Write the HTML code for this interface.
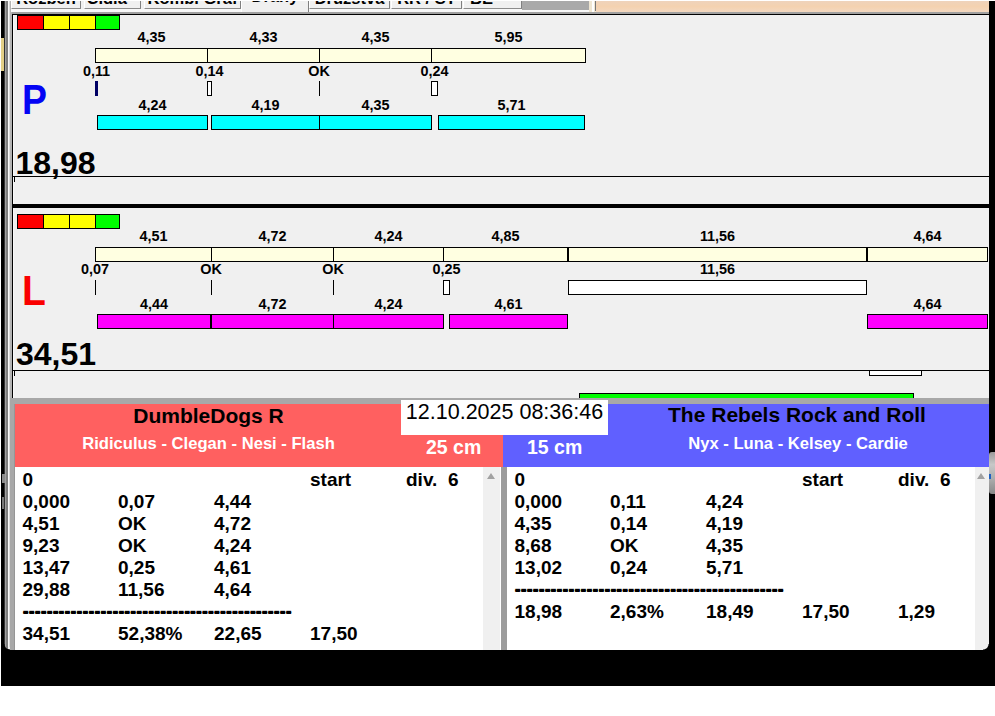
<!DOCTYPE html>
<html><head><meta charset="utf-8"><title>Dráhy</title>
<style>
html,body{margin:0;padding:0;}
body{width:995px;height:716px;position:relative;overflow:hidden;background:#fff;font-family:"Liberation Sans",sans-serif;color:#000;}
div{position:absolute;box-sizing:border-box;}
.b{border:1px solid #000;}
.l{font-weight:bold;font-size:14.4px;line-height:16px;text-align:center;white-space:nowrap;}
.tab{top:-11px;height:20px;background:#f0f0f0;border-right:1px solid #808080;border-bottom:1px solid #8c8c8c;border-left:1px solid #fff;font-weight:bold;font-size:16.5px;line-height:18px;text-align:center;overflow:hidden;white-space:nowrap;}
.big{font-weight:bold;font-size:32px;line-height:36px;white-space:nowrap;}
.let{font-weight:bold;font-size:42.5px;line-height:48px;}
.row{font-weight:bold;font-size:19px;line-height:22px;height:22px;white-space:nowrap;left:0;width:100%;}
.row span{position:absolute;top:0;}
.dash{letter-spacing:-0.35px;text-shadow:0 -1px 0 #000;}
.c0{left:7.5px}.c1{left:103px}.c2{left:199px}.c3{left:295px}.c4{left:391px}
.title{font-weight:bold;font-size:21px;line-height:24px;text-align:center;white-space:nowrap;}
.names{font-weight:bold;font-size:16.6px;line-height:18px;text-align:center;white-space:nowrap;color:#fff;}
.cm{font-weight:bold;font-size:19.5px;line-height:22px;white-space:nowrap;color:#fff;}
</style></head><body>

<div style="left:1px;top:1px;width:994px;height:685px;background:#000;"></div>
<div style="left:1px;top:38px;width:5px;height:33px;background:#e3cf86;"></div>
<div style="left:5px;top:1px;width:984px;height:649px;background:#f0f0f0;border-bottom-left-radius:6px;border-bottom-right-radius:6px;"></div>
<div style="left:4px;top:1px;width:1px;height:649px;background:#333;"></div>
<div style="left:5px;top:1px;width:1px;height:649px;background:#a0a0a0;border-bottom-left-radius:6px;"></div>
<div style="left:6px;top:1px;width:2px;height:648px;background:#7e7e7e;"></div>
<div style="left:8px;top:1px;width:1px;height:646px;background:#fafafa;"></div>
<div style="left:9px;top:1px;width:1px;height:646px;background:#dcdcdc;"></div>
<div style="left:10px;top:1px;width:2px;height:397px;background:#b4b4b4;"></div>
<div style="left:13px;top:15px;width:1px;height:383px;background:#f9f9f9;"></div>
<div style="left:11px;top:9px;width:978px;height:3px;background:#f8f8f8;"></div>
<div class="tab" style="left:11px;width:70px;">Rozběh</div>
<div class="tab" style="left:84px;width:57px;text-align:left;padding-left:1.5px;">Čidla</div>
<div class="tab" style="left:144px;width:97px;">Kombi Graf</div>
<div class="tab" style="left:309px;width:81px;">Družstva</div>
<div class="tab" style="left:391px;width:71px;">RR / ST</div>
<div class="tab" style="left:463px;width:59px;text-align:left;padding-left:6px;">BE</div>
<div class="tab" style="left:241px;width:68px;top:-12.4px;height:24.4px;line-height:16px;border-bottom:none;">Dráhy</div>
<div style="left:522px;top:1px;width:67px;height:9px;background:#a9a9a9;"></div>
<div style="left:589px;top:1px;width:7px;height:11px;background:#efe6d2;"></div>
<div style="left:592px;top:1px;width:2px;height:11px;background:#fff;"></div>
<div style="left:595px;top:1px;width:1px;height:10px;background:#777;"></div>
<div style="left:596px;top:1px;width:393px;height:11px;background:linear-gradient(#efd3bb,#f4d2b0 50%,#f3d8c0);"></div>
<div style="left:12px;top:12px;width:977px;height:2px;background:#a0a0a0;"></div>
<div style="left:12px;top:14px;width:977px;height:1px;background:#000;"></div>
<div style="left:12px;top:14px;width:1px;height:384px;background:#000;"></div>
<div style="left:12px;top:204px;width:977px;height:4px;background:#000;"></div>
<div class="b" style="left:17px;top:15px;width:27px;height:15px;background:#f00;"></div>
<div class="b" style="left:43px;top:15px;width:27px;height:15px;background:#ff0;"></div>
<div class="b" style="left:69px;top:15px;width:27px;height:15px;background:#ff0;"></div>
<div class="b" style="left:95px;top:15px;width:25px;height:15px;background:#0f0;"></div>
<div class="b" style="left:17px;top:214px;width:27px;height:15px;background:#f00;"></div>
<div class="b" style="left:43px;top:214px;width:27px;height:15px;background:#ff0;"></div>
<div class="b" style="left:69px;top:214px;width:27px;height:15px;background:#ff0;"></div>
<div class="b" style="left:95px;top:214px;width:25px;height:15px;background:#0f0;"></div>
<div class="b" style="left:95px;top:48px;width:113px;height:15px;background:#ffffe1;"></div>
<div class="l" style="left:111.5px;top:29px;width:80px">4,35</div>
<div class="b" style="left:207px;top:48px;width:113px;height:15px;background:#ffffe1;"></div>
<div class="l" style="left:223.5px;top:29px;width:80px">4,33</div>
<div class="b" style="left:319px;top:48px;width:113px;height:15px;background:#ffffe1;"></div>
<div class="l" style="left:335.5px;top:29px;width:80px">4,35</div>
<div class="b" style="left:431px;top:48px;width:155px;height:15px;background:#ffffe1;"></div>
<div class="l" style="left:468.5px;top:29px;width:80px">5,95</div>
<div class="l" style="left:56.5px;top:63px;width:80px">0,11</div>
<div style="left:95px;top:81px;width:3px;height:15px;background:#000064;"></div>
<div class="l" style="left:169.5px;top:63px;width:80px">0,14</div>
<div class="b" style="left:207px;top:81px;width:5px;height:15px;background:#fff;"></div>
<div class="l" style="left:279.0px;top:63px;width:80px">OK</div>
<div style="left:319px;top:81px;width:1px;height:15px;background:#000;"></div>
<div class="l" style="left:394.5px;top:63px;width:80px">0,24</div>
<div class="b" style="left:431px;top:81px;width:7px;height:15px;background:#fff;"></div>
<div class="b" style="left:97px;top:115px;width:111px;height:15px;background:#0ff;"></div>
<div class="l" style="left:112.5px;top:97px;width:80px">4,24</div>
<div class="b" style="left:211px;top:115px;width:109px;height:15px;background:#0ff;"></div>
<div class="l" style="left:225.5px;top:97px;width:80px">4,19</div>
<div class="b" style="left:319px;top:115px;width:113px;height:15px;background:#0ff;"></div>
<div class="l" style="left:335.5px;top:97px;width:80px">4,35</div>
<div class="b" style="left:438px;top:115px;width:147px;height:15px;background:#0ff;"></div>
<div class="l" style="left:471.5px;top:97px;width:80px">5,71</div>
<div class="let" style="left:22px;top:75.5px;color:#0404f4;transform:scaleX(0.88);transform-origin:0 0;">P</div>
<div class="big" style="left:15.5px;top:144.6px;">18,98</div>
<div style="left:13px;top:176px;width:976px;height:1px;background:#000;"></div>
<div style="left:14px;top:176px;width:1px;height:6px;background:#000;"></div>
<div class="b" style="left:95px;top:247px;width:117px;height:15px;background:#ffffe1;"></div>
<div class="l" style="left:113.5px;top:228px;width:80px">4,51</div>
<div class="b" style="left:211px;top:247px;width:123px;height:15px;background:#ffffe1;"></div>
<div class="l" style="left:232.5px;top:228px;width:80px">4,72</div>
<div class="b" style="left:333px;top:247px;width:111px;height:15px;background:#ffffe1;"></div>
<div class="l" style="left:348.5px;top:228px;width:80px">4,24</div>
<div class="b" style="left:443px;top:247px;width:125px;height:15px;background:#ffffe1;"></div>
<div class="l" style="left:465.5px;top:228px;width:80px">4,85</div>
<div class="b" style="left:568px;top:247px;width:299px;height:15px;background:#ffffe1;"></div>
<div class="l" style="left:677.5px;top:228px;width:80px">11,56</div>
<div class="b" style="left:867px;top:247px;width:121px;height:15px;background:#ffffe1;"></div>
<div class="l" style="left:887.5px;top:228px;width:80px">4,64</div>
<div class="l" style="left:55.0px;top:261px;width:80px">0,07</div>
<div style="left:95px;top:280px;width:1px;height:15px;background:#000;"></div>
<div class="l" style="left:171.0px;top:261px;width:80px">OK</div>
<div style="left:211px;top:280px;width:1px;height:15px;background:#000;"></div>
<div class="l" style="left:293.0px;top:261px;width:80px">OK</div>
<div style="left:333px;top:280px;width:1px;height:15px;background:#000;"></div>
<div class="l" style="left:406.5px;top:261px;width:80px">0,25</div>
<div class="b" style="left:443px;top:280px;width:7px;height:15px;background:#fff;"></div>
<div class="l" style="left:677.5px;top:261px;width:80px">11,56</div>
<div class="b" style="left:568px;top:280px;width:299px;height:15px;background:#fff;"></div>
<div class="b" style="left:97px;top:314px;width:114px;height:15px;background:#f0f;"></div>
<div class="l" style="left:114.0px;top:296px;width:80px">4,44</div>
<div class="b" style="left:211px;top:314px;width:123px;height:15px;background:#f0f;"></div>
<div class="l" style="left:232.5px;top:296px;width:80px">4,72</div>
<div class="b" style="left:333px;top:314px;width:111px;height:15px;background:#f0f;"></div>
<div class="l" style="left:348.5px;top:296px;width:80px">4,24</div>
<div class="b" style="left:449px;top:314px;width:119px;height:15px;background:#f0f;"></div>
<div class="l" style="left:468.5px;top:296px;width:80px">4,61</div>
<div class="b" style="left:867px;top:314px;width:121px;height:15px;background:#f0f;"></div>
<div class="l" style="left:887.5px;top:296px;width:80px">4,64</div>
<div class="let" style="left:22px;top:266.6px;color:#fa0000;transform:scaleX(0.92);transform-origin:0 0;">L</div>
<div class="big" style="left:16px;top:335.5px;">34,51</div>
<div style="left:13px;top:370px;width:976px;height:1px;background:#000;"></div>
<div style="left:14px;top:370px;width:1px;height:6px;background:#000;"></div>
<div class="b" style="left:869px;top:370px;width:53px;height:6px;background:#fff;"></div>
<div class="b" style="left:579px;top:393px;width:335px;height:6px;background:#0f0;"></div>
<div style="left:10px;top:398px;width:979px;height:6px;background:#a8a8a8;"></div>
<div style="left:10px;top:398px;width:5px;height:252px;background:#a8a8a8;"></div>
<div style="left:14px;top:404px;width:1px;height:246px;background:#969696;"></div>
<div style="left:15px;top:404px;width:488px;height:63px;background:#ff6060;"></div>
<div style="left:503px;top:404px;width:486px;height:63px;background:#6060ff;"></div>
<div class="title" style="left:15px;top:403.5px;width:387px;">DumbleDogs R</div>
<div class="names" style="left:15px;top:435px;width:387px;">Ridiculus - Clegan - Nesi - Flash</div>
<div class="title" style="left:606px;top:403.4px;width:382px;">The Rebels Rock and Roll</div>
<div class="names" style="left:607px;top:435px;width:382px;">Nyx - Luna - Kelsey - Cardie</div>
<div style="left:401px;top:400px;width:207px;height:35px;background:#fff;"></div>
<div style="left:401px;top:400px;width:207px;height:34px;font-size:21.5px;line-height:24px;text-align:center;white-space:nowrap;">12.10.2025 08:36:46</div>
<div class="cm" style="left:426px;top:436px;">25 cm</div>
<div class="cm" style="left:527px;top:436px;">15 cm</div>
<div style="left:15px;top:467px;width:469px;height:183px;background:#fff;overflow:hidden;">
<div class="row" style="top:2px;">
<span class="c0">0</span>
<span class="c3">start</span>
<span class="c4">div.&nbsp; 6</span>
</div>
<div class="row" style="top:24px;">
<span class="c0">0,000</span>
<span class="c1">0,07</span>
<span class="c2">4,44</span>
</div>
<div class="row" style="top:46px;">
<span class="c0">4,51</span>
<span class="c1">OK</span>
<span class="c2">4,72</span>
</div>
<div class="row" style="top:68px;">
<span class="c0">9,23</span>
<span class="c1">OK</span>
<span class="c2">4,24</span>
</div>
<div class="row" style="top:90px;">
<span class="c0">13,47</span>
<span class="c1">0,25</span>
<span class="c2">4,61</span>
</div>
<div class="row" style="top:112px;">
<span class="c0">29,88</span>
<span class="c1">11,56</span>
<span class="c2">4,64</span>
</div>
<div class="row" style="top:134px;">
<span class="c0 dash">---------------------------------------------</span>
</div>
<div class="row" style="top:156px;">
<span class="c0">34,51</span>
<span class="c1">52,38%</span>
<span class="c2">22,65</span>
<span class="c3">17,50</span>
</div>
</div>
<div style="left:507px;top:467px;width:468px;height:183px;background:#fff;overflow:hidden;">
<div class="row" style="top:2px;">
<span class="c0">0</span>
<span class="c3">start</span>
<span class="c4">div.&nbsp; 6</span>
</div>
<div class="row" style="top:24px;">
<span class="c0">0,000</span>
<span class="c1">0,11</span>
<span class="c2">4,24</span>
</div>
<div class="row" style="top:46px;">
<span class="c0">4,35</span>
<span class="c1">0,14</span>
<span class="c2">4,19</span>
</div>
<div class="row" style="top:68px;">
<span class="c0">8,68</span>
<span class="c1">OK</span>
<span class="c2">4,35</span>
</div>
<div class="row" style="top:90px;">
<span class="c0">13,02</span>
<span class="c1">0,24</span>
<span class="c2">5,71</span>
</div>
<div class="row" style="top:112px;">
<span class="c0 dash">---------------------------------------------</span>
</div>
<div class="row" style="top:134px;">
<span class="c0">18,98</span>
<span class="c1">2,63%</span>
<span class="c2">18,49</span>
<span class="c3">17,50</span>
<span class="c4">1,29</span>
</div>
</div>
<div style="left:483px;top:467px;width:17px;height:183px;background:#f0f0f0;"></div>
<div style="left:486.5px;top:473px;width:0;height:0;border-left:4.5px solid transparent;border-right:4.5px solid transparent;border-bottom:6px solid #a2a2a2;"></div>
<div style="left:974.5px;top:467px;width:14.5px;height:183px;background:#f0f0f0;"></div>
<div style="left:977.3px;top:473px;width:0;height:0;border-left:4.5px solid transparent;border-right:4.5px solid transparent;border-bottom:6px solid #a2a2a2;"></div>
<div style="left:500px;top:467px;width:1px;height:183px;background:#fff;"></div>
<div style="left:501px;top:467px;width:6px;height:183px;background:#9c9c9c;"></div>
<div style="left:989px;top:452px;width:6px;height:42px;background:linear-gradient(#9a9a9a,#c8c8c8 30%,#b0b0b0 60%,#888);border-radius:3px 0 0 3px;"></div>
<div style="left:989px;top:474px;width:2px;height:5px;background:#2060c0;"></div>
<div style="left:2px;top:474px;width:3px;height:9px;background:#8a8a8a;"></div>
<div style="left:2px;top:497px;width:2px;height:12px;background:#777;"></div>
<div style="left:983px;top:644px;width:6px;height:6px;background:radial-gradient(circle at 0 0,rgba(0,0,0,0) 5px,#000 6px);"></div>
<div style="left:4px;top:644px;width:6px;height:6px;background:radial-gradient(circle at 100% 0,rgba(0,0,0,0) 5px,#000 6px);"></div>
<div style="left:0px;top:0px;width:995px;height:1px;background:#fff;"></div>
</body></html>
